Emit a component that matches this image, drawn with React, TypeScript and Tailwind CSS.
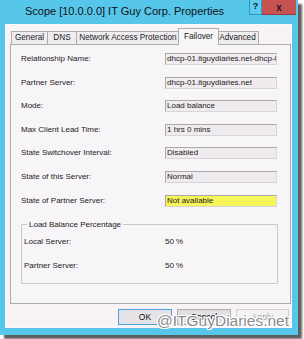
import React from "react";

const font = { fontFamily: '"Liberation Sans", Arial, sans-serif' };

function Field({ value, yellow }: { value: string; yellow?: boolean }) {
  return (
    <div
      className={
        "h-[12px] w-[112px] border border-[#a9a9a9] border-b-[#d6d6d6] border-r-[#d6d6d6] flex items-center pl-[1px] overflow-hidden whitespace-nowrap text-[8px] leading-none text-[#1a1a1a] " +
        (yellow ? "bg-[#f6f65a]" : "bg-[#efebef]")
      }
    >
      {value}
    </div>
  );
}

const rows: [string, string, boolean?][] = [
  ["Relationship Name:", "dhcp-01.itguydiaries.net-dhcp-02"],
  ["Partner Server:", "dhcp-01.itguydiaries.net"],
  ["Mode:", "Load balance"],
  ["Max Client Lead Time:", "1 hrs 0 mins"],
  ["State Switchover Interval:", "Disabled"],
  ["State of this Server:", "Normal"],
  ["State of Partner Server:", "Not available", true],
];

function Tab({ label, w, active }: { label: string; w: number; active?: boolean }) {
  if (active) {
    return (
      <div
        className="relative z-10 -mb-px h-[17px] border border-b-0 border-[#acacac] bg-[#f8f5f8] flex items-center justify-center text-[8.2px] text-[#1a1a1a] -mx-[2px]"
        style={{ width: w }}
      >
        {label}
      </div>
    );
  }
  return (
    <div
      className="h-[13px] border border-b-0 border-[#acacac] bg-[#f0edf0] flex items-center justify-center text-[8.2px] text-[#1a1a1a] -ml-px first:ml-0"
      style={{ width: w }}
    >
      {label}
    </div>
  );
}

export default function App() {
  return (
    <div className="w-[304px] h-[339px] bg-white relative overflow-hidden" style={font}>
      <div className="w-[298px] h-[335px] bg-[#56c6ea] shadow-[4px_4px_2px_rgba(40,40,40,0.75)] flex flex-col">
        {/* Title bar */}
        <div className="h-[24px] flex relative">
          <div className="w-[249px] flex items-center justify-center pb-[1px] text-[11px] text-[#111]">
            Scope [10.0.0.0] IT Guy Corp. Properties
          </div>
          <div className="w-[13px] h-[15px] bg-[#5fcbee] border-l border-r border-b border-[#2f98bf] flex items-center justify-center text-[9px] font-bold text-[#111]">
            ?
          </div>
          <div className="w-[34px] h-[15px] bg-[#c75252] border-b border-[#9c3a3a] flex items-center justify-center text-[10px] font-bold text-[#1a1a1a]">
            x
          </div>
        </div>
        {/* Content */}
        <div className="ml-[5px] w-[287px] h-[304px] bg-[#f7f3f7] border border-[#fbf9fb] flex flex-col pl-[4px] pt-[1px]">
          {/* Tabs */}
          <div className="flex items-end h-[18px] pl-[1px]">
            <Tab label="General" w={37} />
            <Tab label="DNS" w={30} />
            <Tab label="Network Access Protection" w={104} />
            <Tab label="Failover" w={41} active />
            <Tab label="Advanced" w={43} />
          </div>
          {/* Panel */}
          <div className="w-[281px] h-[260px] border border-[#acacac] bg-[#f8f5f8] pl-[10px] pt-[8px]">
            <div className="flex flex-col gap-[11.6px]">
              {rows.map(([l, v, y]) => (
                <div key={l} className="flex items-center h-[12px]">
                  <div className="w-[144px] text-[8px] text-[#1a1a1a] whitespace-nowrap">{l}</div>
                  <Field value={v} yellow={y} />
                </div>
              ))}
            </div>
            {/* Group box */}
            <div className="relative mt-[17px] w-[257px] h-[60px] border border-[#c9c6c9] rounded-[1px]">
              <div className="absolute -top-[6px] left-[5px] px-[2px] bg-[#f8f5f8] text-[8px] text-[#1a1a1a] leading-[11px]">
                Load Balance Percentage
              </div>
              <div className="flex flex-col pl-[2px] pt-[11px] gap-[12px]">
                <div className="flex items-center h-[12px] text-[8px] text-[#1a1a1a]">
                  <div className="w-[141px]">Local Server:</div>
                  <div>50 %</div>
                </div>
                <div className="flex items-center h-[12px] text-[8px] text-[#1a1a1a]">
                  <div className="w-[141px]">Partner Server:</div>
                  <div>50 %</div>
                </div>
              </div>
            </div>
          </div>
          {/* Buttons */}
          <div className="flex justify-end gap-[5px] pr-[2px] mt-[5px]">
            <div className="w-[54px] h-[16px] border border-[#4aa3dc] bg-[#e6e3e6] flex items-center justify-center text-[8.5px] text-[#111]">
              OK
            </div>
            <div className="w-[54px] h-[16px] border border-[#acacac] bg-[#e2dfe2] flex items-center justify-center text-[8.5px] text-[#111]">
              Cancel
            </div>
            <div className="w-[53px] h-[16px] border border-[#d3d0d3] bg-[#f4f1f4] flex items-center justify-center text-[8.5px] text-[#a6a6a6]">
              Apply
            </div>
          </div>
        </div>
      </div>
      {/* Watermark */}
      <div
        className="absolute left-[157px] top-[313px] text-[15.5px] text-[#8c8c8c] leading-none whitespace-nowrap"
        style={{
          textShadow:
            "1px 0 0 #fff, -1px 0 0 #fff, 0 1px 0 #fff, 0 -1px 0 #fff, 1px 1px 0 #fff, -1px -1px 0 #fff, 1px -1px 0 #fff, -1px 1px 0 #fff",
        }}
      >
        @ITGuyDiaries.net
      </div>
    </div>
  );
}
